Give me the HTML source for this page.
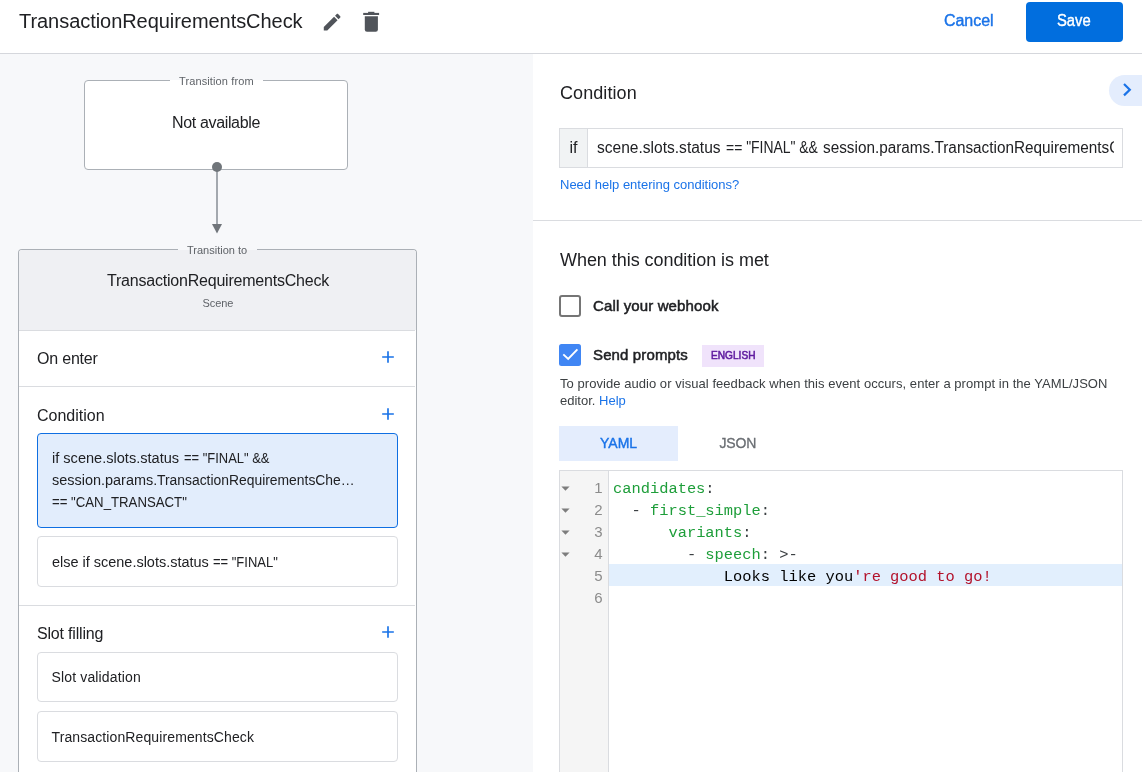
<!DOCTYPE html>
<html>
<head>
<meta charset="utf-8">
<title>TransactionRequirementsCheck</title>
<style>
*{box-sizing:border-box;margin:0;padding:0}
html,body{width:1142px;height:772px;overflow:hidden;background:#fff}
body{position:relative;will-change:transform;font-family:"Liberation Sans",sans-serif;color:#202124}
.a{position:absolute;white-space:nowrap;line-height:1}
#hdr{left:0;top:0;width:1142px;height:54px;background:#fff;border-bottom:1px solid #d5d7dc}
#left{left:0;top:54px;width:533px;height:718px;background:#f7f8fa}
#right{left:533px;top:54px;width:609px;height:718px;background:#fff}
.gs{color:#202124}
.blue{color:#1a73e8}
.med{-webkit-text-stroke:0.4px currentColor}
.g{color:#1e9e3a}.p{color:#3c4043}.k{color:#000}.r{color:#b3122b}
</style>
</head>
<body>
<div class="a" id="hdr"></div>
<div class="a" id="left"></div>
<div class="a" id="right"></div>

<!-- header -->
<div class="a gs" id="t_title" style="left:19px;top:9px;font-size:20px;letter-spacing:-0.05px;line-height:24px">TransactionRequirementsCheck</div>
<svg class="a" id="i_edit" style="left:320.5px;top:11px" width="22.3" height="22.3" viewBox="0 0 24 24"><path fill="#50545a" d="M3 17.25V21h3.75L17.81 9.94l-3.75-3.75L3 17.25zM20.71 7.04c.39-.39.39-1.02 0-1.41l-2.34-2.34c-.39-.39-1.02-.39-1.41 0l-1.83 1.83 3.75 3.75 1.83-1.83z"/></svg>
<svg class="a" id="i_del" style="left:360px;top:8px" width="24" height="28" viewBox="360 8 24 28"><g fill="#50545a"><rect x="368.1" y="11.8" width="6.3" height="2"/><rect x="363.2" y="12.9" width="15.9" height="2.1"/><path d="M364.8 16.2H377.9V29.5a2.2 2.2 0 0 1-2.2 2.2H367a2.2 2.2 0 0 1-2.2-2.2z"/></g></svg>
<div class="a blue med" id="t_cancel" style="left:944px;top:11px;font-size:16px;letter-spacing:-0.04px;line-height:20px">Cancel</div>
<div class="a" id="b_save" style="left:1026px;top:2px;width:97px;height:40px;border-radius:4px;background:#016ede"></div>
<div class="a med" id="t_save" style="left:1057px;top:11px;font-size:16px;transform:scaleX(0.925);transform-origin:0 0;line-height:20px;color:#fff">Save</div>

<!-- left: transition from -->
<div class="a" id="box_from" style="left:84px;top:80px;width:264px;height:90px;border:1px solid #abb0b6;border-radius:4px;background:#fff"></div>
<div class="a" id="leg_from" style="left:170px;top:74px;width:93px;height:12px;background:linear-gradient(#f7f8fa 0,#f7f8fa 6px,#fff 6px)"></div>
<div class="a" id="t_from" style="left:179px;top:75px;font-size:11px;letter-spacing:0.12px;line-height:13px;color:#5f6368">Transition from</div>
<div class="a gs" id="t_na" style="left:172px;top:113px;font-size:16px;letter-spacing:-0.35px;line-height:20px">Not available</div>
<div class="a" id="ln" style="left:216px;top:168px;width:2px;height:57px;background:#a3a8ae"></div>
<div class="a" id="dot" style="left:212px;top:162px;width:10px;height:10px;border-radius:5px;background:#70757a"></div>
<svg class="a" id="arr" style="left:212px;top:224px" width="10" height="10" viewBox="0 0 10 10"><path fill="#70757a" d="M0 0h10L5 9.5z"/></svg>

<!-- left: scene card -->
<div class="a" id="card" style="left:18px;top:249px;width:399px;height:523px;border:1px solid #abb0b6;border-bottom:0;border-radius:4px 4px 0 0;background:#fff"></div>
<div class="a" id="card_h" style="left:19px;top:250px;width:397px;height:80px;background:#eff0f3;border-radius:3px 3px 0 0"></div>
<div class="a" id="leg_to" style="left:178px;top:243px;width:79px;height:7px;background:#f7f8fa"></div>
<div class="a" id="t_to" style="left:187px;top:244px;font-size:11px;line-height:13px;color:#5f6368">Transition to</div>
<div class="a gs" id="t_ctitle" style="left:107px;top:271px;font-size:16px;letter-spacing:-0.21px;line-height:20px">TransactionRequirementsCheck</div>
<div class="a" id="t_scene" style="left:202.5px;top:297px;font-size:11px;letter-spacing:-0.1px;line-height:13px;color:#5f6368">Scene</div>
<div class="a" id="d1" style="left:19px;top:330px;width:396px;height:1px;background:#dadce0"></div>
<div class="a gs" id="t_onenter" style="left:37px;top:349px;font-size:16px;letter-spacing:-0.2px;line-height:20px">On enter</div>
<div class="a" id="d2" style="left:19px;top:386px;width:396px;height:1px;background:#dadce0"></div>
<div class="a gs" id="t_cond" style="left:37px;top:406px;font-size:16px;letter-spacing:0px;line-height:20px">Condition</div>
<svg class="a plus" id="p1" style="left:378px;top:347px" width="20" height="20" viewBox="0 0 24 24"><path fill="#1a73e8" d="M19 13h-6v6h-2v-6H5v-2h6V5h2v6h6v2z"/></svg>
<svg class="a plus" id="p2" style="left:378px;top:404px" width="20" height="20" viewBox="0 0 24 24"><path fill="#1a73e8" d="M19 13h-6v6h-2v-6H5v-2h6V5h2v6h6v2z"/></svg>
<svg class="a plus" id="p3" style="left:378px;top:622px" width="20" height="20" viewBox="0 0 24 24"><path fill="#1a73e8" d="M19 13h-6v6h-2v-6H5v-2h6V5h2v6h6v2z"/></svg>

<div class="a" id="sel" style="left:37px;top:433px;width:361px;height:95px;border:1px solid #0f6fe2;border-radius:4px;background:#e2edfc"></div>
<div class="a gs" id="t_s1" style="left:51.5px;top:450px;font-size:14px;line-height:16px;transform:scaleX(1.04);transform-origin:0 0">if scene.slots.status</div>
<div class="a gs" id="t_s1b" style="left:184.2px;top:450px;font-size:14px;line-height:16px;transform:scaleX(0.924);transform-origin:0 0">== "FINAL" &amp;&amp;</div>
<div class="a gs" id="t_s2" style="left:51.5px;top:472px;font-size:14px;line-height:16px;transform:scaleX(1.032);transform-origin:0 0">session.params.</div>
<div class="a gs" id="t_s2b" style="left:156.8px;top:472px;font-size:14px;line-height:16px;transform:scaleX(0.991);transform-origin:0 0">TransactionRequirementsChe…</div>
<div class="a gs" id="t_s3" style="left:51.5px;top:494px;font-size:14px;transform:scaleX(0.943);transform-origin:0 0;line-height:16px">== "CAN_TRANSACT"</div>

<div class="a" id="bx_else" style="left:37px;top:536px;width:361px;height:51px;border:1px solid #dadce0;border-radius:4px;background:#fff"></div>
<div class="a gs" id="t_else" style="left:51.5px;top:554px;font-size:14px;line-height:16px;transform:scaleX(1.033);transform-origin:0 0">else if scene.slots.status</div>
<div class="a gs" id="t_elseb" style="left:213px;top:554px;font-size:14px;line-height:16px;transform:scaleX(0.927);transform-origin:0 0">== "FINAL"</div>
<div class="a" id="d3" style="left:19px;top:605px;width:396px;height:1px;background:#dadce0"></div>
<div class="a gs" id="t_slot" style="left:37px;top:624px;font-size:16px;letter-spacing:-0.19px;line-height:20px">Slot filling</div>
<div class="a" id="bx_sv" style="left:37px;top:652px;width:361px;height:50px;border:1px solid #dadce0;border-radius:4px;background:#fff"></div>
<div class="a gs" id="t_sv" style="left:51.5px;top:669px;font-size:14px;letter-spacing:0.15px;line-height:16px">Slot validation</div>
<div class="a" id="bx_trc" style="left:37px;top:711px;width:361px;height:51px;border:1px solid #dadce0;border-radius:4px;background:#fff"></div>
<div class="a gs" id="t_trc" style="left:51.5px;top:729px;font-size:14px;letter-spacing:0.11px;line-height:16px">TransactionRequirementsCheck</div>

<!-- right panel -->
<div class="a gs" id="t_rcond" style="left:560px;top:82px;font-size:18px;letter-spacing:0.08px;line-height:22px">Condition</div>
<div class="a" id="chev_bg" style="left:1109px;top:75px;width:33px;height:31px;border-radius:15.5px 0 0 15.5px;background:#e4edfd"></div>
<svg class="a" id="chev" style="left:1115px;top:78px" width="24" height="24" viewBox="0 0 24 24"><path fill="none" stroke="#1a73e8" stroke-width="2.2" d="M9 6l5.8 5.7L9 17.4"/></svg>
<div class="a" id="inp" style="left:559px;top:128px;width:564px;height:40px;border:1px solid #dadce0;background:#fff"></div>
<div class="a" id="inp_if" style="left:560px;top:129px;width:28px;height:38px;background:#f1f3f4;border-right:1px solid #dadce0"></div>
<div class="a gs" id="t_if" style="left:569.5px;top:138px;font-size:16px;line-height:20px">if</div>
<div class="a gs" id="t_inp" style="left:596.6px;top:138px;font-size:16px;line-height:20px;transform:scaleX(0.972);transform-origin:0 0">scene.slots.status</div>
<div class="a gs" id="t_inpb" style="left:726px;top:138px;font-size:16px;line-height:20px;transform:scaleX(0.870);transform-origin:0 0">== "FINAL" &amp;&amp;</div>
<div class="a" id="inp_clip" style="left:822.9px;top:138px;width:291.1px;height:20px;overflow:hidden"><div class="a gs" id="t_inp2" style="left:0;top:0;font-size:16px;line-height:20px;transform:scaleX(0.957);transform-origin:0 0">session.params.TransactionRequirementsCheck</div></div>
<div class="a blue" id="t_need" style="left:560px;top:177px;font-size:13px;line-height:16px">Need help entering conditions?</div>
<div class="a" id="rd" style="left:533px;top:220px;width:609px;height:1px;background:#dadce0"></div>
<div class="a gs" id="t_when" style="left:560px;top:249px;font-size:18px;letter-spacing:-0.05px;line-height:22px">When this condition is met</div>
<div class="a" id="cb1" style="left:559px;top:295px;width:22px;height:22px;border:2px solid #757575;border-radius:3px;background:#fff"></div>
<div class="a gs med" id="t_call" style="left:593px;top:297px;font-size:15px;letter-spacing:0.13px;-webkit-text-stroke:0.5px #202124;line-height:18px">Call your webhook</div>
<div class="a" id="cb2" style="left:559px;top:344px;width:22px;height:22px;border-radius:2.5px;background:#4086f4"></div>
<svg class="a" id="chk" style="left:559px;top:344px" width="22" height="22" viewBox="0 0 22 22"><path fill="none" stroke="#fff" stroke-width="1.9" d="M4.3 10.4L9.2 15L18.4 5.3"/></svg>
<div class="a gs med" id="t_send" style="left:593px;top:346px;font-size:15px;letter-spacing:0.13px;-webkit-text-stroke:0.5px #202124;line-height:18px">Send prompts</div>
<div class="a" id="badge" style="left:702px;top:345px;width:62px;height:22px;background:#f0e3fb"></div>
<div class="a med" id="t_eng" style="left:710.6px;top:348px;font-size:10.5px;line-height:14px;-webkit-text-stroke:0.55px #5f1b9f;transform:scaleX(0.965);transform-origin:0 0;color:#5f1b9f">ENGLISH</div>
<div class="a" id="t_d1" style="left:560px;top:376px;font-size:13px;letter-spacing:0.05px;line-height:16px;color:#3c4043">To provide audio or visual feedback when this event occurs, enter a prompt in the YAML/JSON</div>
<div class="a" id="t_d2" style="left:560px;top:393px;font-size:13px;line-height:16px;color:#3c4043">editor. <span class="blue">Help</span></div>
<div class="a" id="tab1" style="left:559px;top:426px;width:119px;height:35px;background:#e4edfd"></div>
<div class="a blue med" id="t_yaml" style="left:600px;top:435px;font-size:14px;line-height:17px">YAML</div>
<div class="a med" id="t_json" style="left:719.4px;top:435px;font-size:14px;line-height:17px;-webkit-text-stroke:0.3px #6a6e73;letter-spacing:-0.15px;color:#6a6e73">JSON</div>

<!-- editor -->
<div class="a" id="ed" style="left:559px;top:470px;width:564px;height:302px;border:1px solid #dadce0;border-bottom:0;background:#fff"></div>
<div class="a" id="gut" style="left:560px;top:471px;width:49px;height:301px;background:#f5f5f5;border-right:1px solid #dadce0"></div>
<div class="a" id="actl" style="left:609px;top:564px;width:513px;height:22px;background:#e2effd"></div>
<pre class="a" id="code" style="white-space:pre;left:613px;top:478px;font-family:'Liberation Mono',monospace;font-size:15.4px;line-height:22px;color:#202124"><span class="g">candidates</span><span class="p">:</span>
<span class="p">  - </span><span class="g">first_simple</span><span class="p">:</span>
      <span class="g">variants</span><span class="p">:</span>
<span class="p">        - </span><span class="g">speech</span><span class="p">: &gt;-</span>
            <span class="k">Looks like you</span><span class="r">'re good to go!</span>
</pre>
<pre class="a" id="nums" style="white-space:pre;left:560px;top:477px;width:42.5px;text-align:right;font-family:'Liberation Sans',sans-serif;font-size:15px;line-height:22px;color:#8c8c8c">1
2
3
4
5
6</pre>
<svg class="a" id="folds" style="left:561px;top:471px" width="10" height="100" viewBox="0 0 10 100"><g fill="#7d7d7d"><path d="M0.4 15.5h8.2l-4.1 4.3z"/><path d="M0.4 37.5h8.2l-4.1 4.3z"/><path d="M0.4 59.5h8.2l-4.1 4.3z"/><path d="M0.4 81.5h8.2l-4.1 4.3z"/></g></svg>
</body>
</html>
